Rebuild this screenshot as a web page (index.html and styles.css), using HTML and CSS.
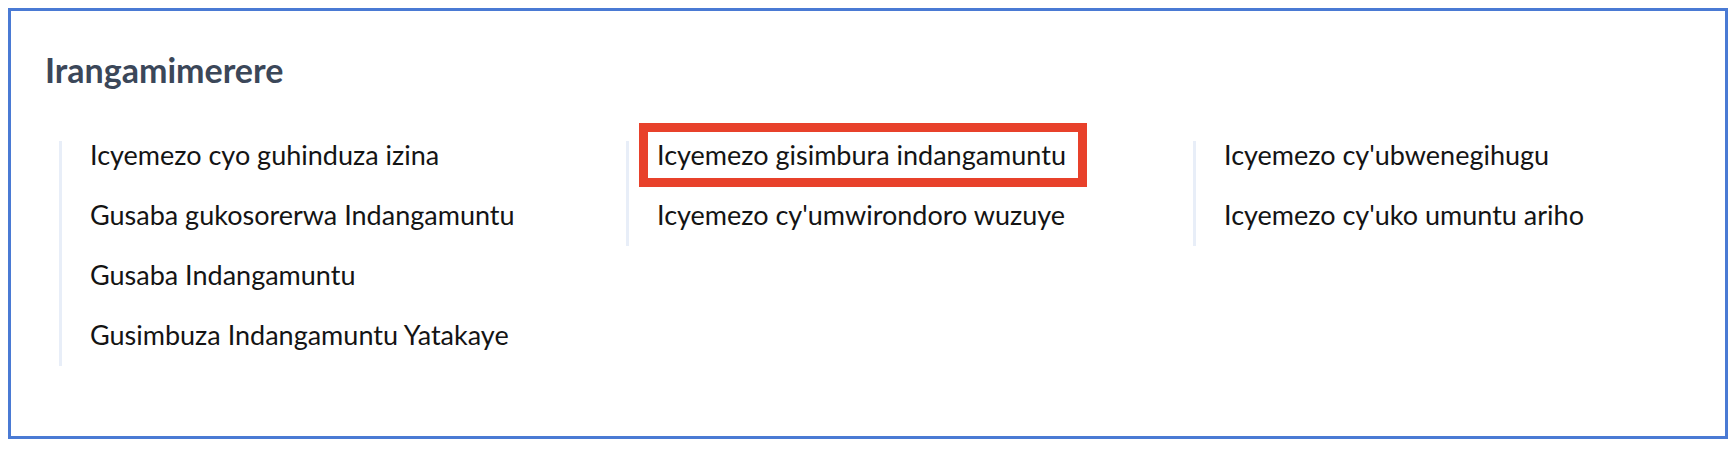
FILE: index.html
```html
<!DOCTYPE html>
<html>
<head>
  <title>Irangamimerere</title>
  <link rel="stylesheet" href="styles.css">
</head>
<body>
  <div class="frame">
    <h2 class="section-title">Irangamimerere</h2>

    <div class="service-columns">
      <ul class="service-list">
        <li>Icyemezo cyo guhinduza izina</li>
        <li>Gusaba gukosorerwa Indangamuntu</li>
        <li>Gusaba Indangamuntu</li>
        <li>Gusimbuza Indangamuntu Yatakaye</li>
      </ul>

      <ul class="service-list">
        <li class="highlight">Icyemezo gisimbura indangamuntu</li>
        <li>Icyemezo cy'umwirondoro wuzuye</li>
      </ul>

      <ul class="service-list">
        <li>Icyemezo cy'ubwenegihugu</li>
        <li>Icyemezo cy'uko umuntu ariho</li>
      </ul>
    </div>
  </div>
</body>
</html>
```

FILE: styles.css
```css
body {
  margin: 8px;
  background-color: #fff;
  font-family: "Lato", "Open Sans", Arial, sans-serif;
}

.frame {
  height: 431px;
  border: 3px solid #4a7ad4;
  padding: 39px 34px 0 34px;
  box-sizing: border-box;
}

.section-title {
  margin: 0;
  font-size: 34px;
  line-height: 40px;
  font-weight: 700;
  color: #3b4759;
}

.service-columns {
  display: grid;
  grid-template-columns: repeat(3, 1fr);
  column-gap: 69px;
  margin-top: 51px;
  margin-left: 14px;
  align-items: start;
}

.service-list {
  list-style: none;
  margin: 0;
  padding: 0 0 17px 28px;
  border-left: 3px solid #e8eef8;
}

.service-list li {
  font-size: 27px;
  line-height: 28px;
  color: #141414;
}

.service-list li + li {
  margin-top: 32px;
}

.service-list li.highlight {
  width: fit-content;
  outline: 9px solid #e8412b;
  outline-offset: 9px;
  padding-right: 3px;
}
```
